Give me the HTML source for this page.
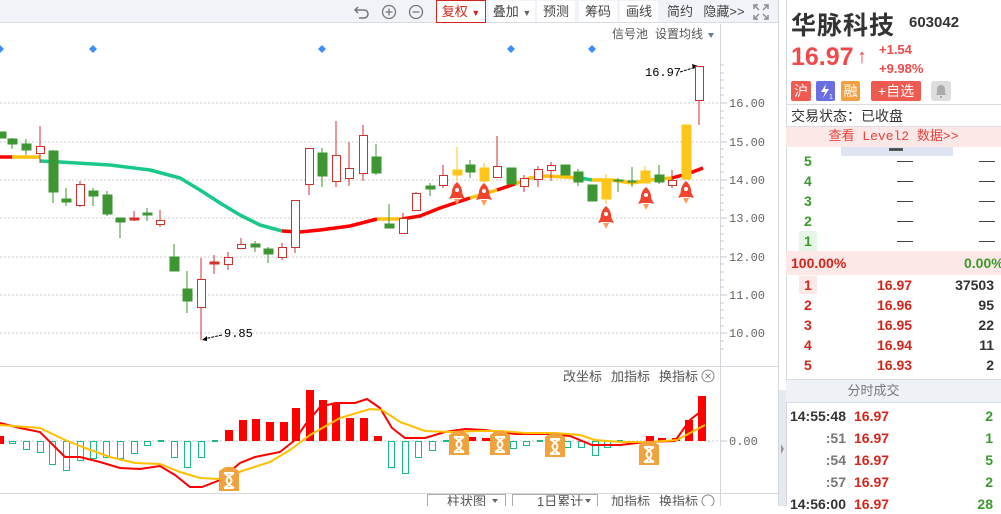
<!DOCTYPE html>
<html><head><meta charset="utf-8"><style>
*{margin:0;padding:0;box-sizing:border-box}
body{width:1001px;height:506px;overflow:hidden;background:#fff;font-family:"Liberation Sans","Noto Sans CJK SC",sans-serif;position:relative}
.a{position:absolute;white-space:nowrap}
.tb{position:absolute;left:0;top:0;width:778px;height:23px;background:#f0f3f8;border-bottom:1px solid #d8dce3}
.bt{position:absolute;top:1px;height:21px;background:#fff;font-size:13px;color:#444;line-height:21px;text-align:center}
.r{color:#d4251c}.g{color:#3a9a2c}
.rw{position:absolute;font-size:14px;font-weight:bold;height:20px;line-height:20px}
</style></head><body>
<div class="tb"></div>
<svg class="a" style="left:350px;top:2px" width="80" height="20">
<path d="M8 5 L5 8 L8 11 M5 8 H14 a4 4 0 0 1 0 8 H9" fill="none" stroke="#777" stroke-width="1.5"/>
<circle cx="39" cy="10" r="6.5" fill="none" stroke="#777" stroke-width="1.3"/><path d="M35.5 10h7M39 6.5v7" stroke="#777" stroke-width="1.3"/>
<circle cx="66" cy="10" r="6.5" fill="none" stroke="#777" stroke-width="1.3"/><path d="M62.5 10h7" stroke="#777" stroke-width="1.3"/>
</svg>
<div class="bt" style="left:436px;width:50px;border:1px solid #d4251c;top:0;height:23px;color:#d4251c">复权 <span style="font-size:9px">▼</span></div>
<div class="bt" style="left:489px;width:46px">叠加 <span style="font-size:9px;color:#666">▼</span></div>
<div class="bt" style="left:537px;width:38px">预测</div>
<div class="bt" style="left:579px;width:38px">筹码</div>
<div class="bt" style="left:620px;width:38px">画线</div>
<div class="bt" style="left:661px;width:38px;background:none">简约</div>
<div class="bt" style="left:702px;width:44px;background:none">隐藏&gt;&gt;</div>
<svg class="a" style="left:753px;top:4px" width="16" height="16"><path d="M1 5V1H5M11 1H15V5M15 11V15H11M5 15H1V11M2 2L6 6M14 2L10 6M14 14L10 10M2 14L6 10" fill="none" stroke="#888" stroke-width="1.4"/></svg>

<svg class="a" style="left:0;top:0" width="786" height="506">
<g stroke="#c8ccd2" stroke-dasharray="2,2" stroke-width="1">
<line x1="0" y1="103" x2="720" y2="103"/><line x1="0" y1="142" x2="720" y2="142"/><line x1="0" y1="180" x2="720" y2="180"/><line x1="0" y1="218" x2="720" y2="218"/><line x1="0" y1="257" x2="720" y2="257"/><line x1="0" y1="295" x2="720" y2="295"/><line x1="0" y1="333" x2="720" y2="333"/><line x1="0" y1="441" x2="720" y2="441"/>
</g>
<line x1="720.5" y1="24" x2="720.5" y2="506" stroke="#d4d8de"/>
<line x1="778.5" y1="0" x2="778.5" y2="506" stroke="#d4d8de"/>
<rect x="779" y="390" width="7" height="116" fill="#e6e9ef"/>
<path d="M781 444 L784 449 L781 454Z" fill="#999"/>
<line x1="0" y1="366.5" x2="778" y2="366.5" stroke="#d4d8de"/>
<line x1="0" y1="493.5" x2="778" y2="493.5" stroke="#d4d8de"/>
<g stroke="#c4c8ce">
<path d="M720 65h4M720 73h4M720 80h4M720 88h4M720 95h4M720 103h7M720 111h4M720 118h4M720 126h4M720 134h4M720 142h7M720 149h4M720 157h4M720 164h4M720 172h4M720 180h7M720 188h4M720 195h4M720 203h4M720 210h4M720 218h7M720 226h4M720 234h4M720 241h4M720 249h4M720 257h7M720 264h4M720 272h4M720 280h4M720 287h4M720 295h7M720 303h4M720 310h4M720 318h4M720 326h4M720 333h7M720 341h4M720 349h4M720 441h7"/>
</g>
<g font-family="Liberation Mono,monospace" font-size="12" fill="#666">
<text x="729" y="107">16.00</text><text x="729" y="146">15.00</text><text x="729" y="184">14.00</text><text x="729" y="222">13.00</text><text x="729" y="261">12.00</text><text x="729" y="299">11.00</text><text x="729" y="337">10.00</text><text x="729" y="445">0.00</text>
<text x="645" y="76" fill="#000">16.97</text><text x="224" y="337" fill="#000">9.85</text>
</g>
<path d="M680 72 L696 67 M222 335 L204 339" stroke="#000" stroke-dasharray="3,1"/>
<path d="M698 66 L692 64 L693 69Z M202 340 L207 336 L207 341Z" fill="#000"/>
<g fill="#3d8eff"><path d="M0 45l4 4-4 4-4-4z"/><path d="M93 45l4 4-4 4-4-4z"/><path d="M322 45l4 4-4 4-4-4z"/><path d="M511 45l4 4-4 4-4-4z"/><path d="M592 45l4 4-4 4-4-4z"/></g>

<g fill="none" stroke-width="3.5" stroke-linejoin="round">
<path d="M0 157 L12 157" stroke="#f00"/>
<path d="M12 157 L40 157" stroke="#ffc20e"/>
<path d="M40 161 L60 162 L110 165 L150 170 L180 178 L200 190 L220 203 L240 215 L260 225 L282 231" stroke="#1ac98a"/>
<path d="M282 231 L300 232 L320 230 L350 226 L377 219" stroke="#f00"/>
<path d="M377 219 L402 219" stroke="#ffc20e"/>
<path d="M402 219 L420 216 L440 208 L470 198" stroke="#f00"/>
<path d="M470 198 L497 190" stroke="#ffc20e"/>
<path d="M497 190 L515 184" stroke="#f00"/>
<path d="M515 184 L530 178 L546 176 L565 177 L580 178" stroke="#ffc20e"/>
<path d="M580 178 L592 180" stroke="#1ac98a"/>
<path d="M592 180 L612 180 L632 183 L650 180 L672 178" stroke="#ffc20e"/>
<path d="M672 178 L690 173 L703 168" stroke="#f00"/>
</g>

<g stroke-width="1">
<g fill="#3d9632" stroke="#3d9632">
<rect x="-2" y="132" width="8" height="6"/>
<line x1="12" y1="138" x2="12" y2="149"/><rect x="8" y="139" width="9" height="5"/>
<line x1="26" y1="139" x2="26" y2="155"/><rect x="22" y="144" width="9" height="6"/>
<line x1="53" y1="150" x2="53" y2="203"/><rect x="49" y="151" width="9" height="41"/>
<line x1="66" y1="188" x2="66" y2="206"/><rect x="62" y="199" width="9" height="3"/>
<line x1="93" y1="188" x2="93" y2="206"/><rect x="89" y="191" width="9" height="5"/>
<line x1="107" y1="191" x2="107" y2="216"/><rect x="103" y="195" width="9" height="19"/>
<line x1="120" y1="218" x2="120" y2="238"/><rect x="116" y="218" width="9" height="4"/>
<line x1="147" y1="208" x2="147" y2="221"/><rect x="143" y="213" width="9" height="2"/>
<line x1="174" y1="244" x2="174" y2="271"/><rect x="170" y="257" width="9" height="14"/>
<line x1="187" y1="271" x2="187" y2="313"/><rect x="183" y="289" width="9" height="12"/>
<line x1="255" y1="241" x2="255" y2="252"/><rect x="251" y="244" width="9" height="3"/>
<line x1="268" y1="247" x2="268" y2="263"/><rect x="264" y="249" width="9" height="5"/>
<line x1="322" y1="148" x2="322" y2="187"/><rect x="318" y="153" width="9" height="23"/>
<line x1="376" y1="144" x2="376" y2="175"/><rect x="372" y="157" width="9" height="16"/>
<line x1="389" y1="204" x2="389" y2="228"/><rect x="385" y="224" width="9" height="4"/>
<line x1="430" y1="183" x2="430" y2="196"/><rect x="426" y="186" width="9" height="3"/>
<line x1="470" y1="160" x2="470" y2="178"/><rect x="466" y="165" width="9" height="7"/>
<rect x="507" y="168" width="9" height="16"/>
<rect x="561" y="165" width="9" height="10"/>
<line x1="578" y1="169" x2="578" y2="186"/><rect x="574" y="172" width="9" height="10"/>
<rect x="588" y="185" width="9" height="16"/>
<line x1="618" y1="178" x2="618" y2="192"/><rect x="614" y="180" width="9" height="1"/>
<line x1="632" y1="167" x2="632" y2="187"/><rect x="628" y="181" width="8" height="1"/>
<line x1="659" y1="165" x2="659" y2="184"/><rect x="655" y="175" width="9" height="7"/>
</g>
<g fill="#fff" stroke="#d0312d">
<line x1="40" y1="126" x2="40" y2="163"/><rect x="36.5" y="146.5" width="8" height="7"/>
<line x1="80" y1="181" x2="80" y2="207"/><rect x="76.5" y="184.5" width="8" height="21"/>
<line x1="134" y1="211" x2="134" y2="221"/><rect x="130" y="218" width="9" height="2" fill="#d0312d"/>
<line x1="160" y1="210" x2="160" y2="227"/><rect x="156.5" y="220.5" width="8" height="4"/>
<line x1="201" y1="258" x2="201" y2="340"/><rect x="197.5" y="279.5" width="8" height="28"/>
<line x1="214" y1="255" x2="214" y2="274"/><rect x="210" y="262" width="9" height="2" fill="#d0312d"/>
<line x1="228" y1="252" x2="228" y2="270"/><rect x="224.5" y="257.5" width="8" height="7"/>
<line x1="241" y1="238" x2="241" y2="248"/><rect x="237.5" y="244.5" width="8" height="4"/>
<line x1="282" y1="243" x2="282" y2="260"/><rect x="278.5" y="247.5" width="8" height="10"/>
<line x1="295" y1="200" x2="295" y2="253"/><rect x="291.5" y="200.5" width="8" height="47"/>
<line x1="309" y1="148" x2="309" y2="195"/><rect x="305.5" y="148.5" width="8" height="36"/>
<line x1="336" y1="121" x2="336" y2="187"/><rect x="332.5" y="155.5" width="8" height="26"/>
<line x1="349" y1="142" x2="349" y2="186"/><rect x="345.5" y="168.5" width="8" height="10"/>
<line x1="363" y1="125" x2="363" y2="181"/><rect x="359.5" y="135.5" width="8" height="38"/>
<line x1="403" y1="213" x2="403" y2="233"/><rect x="399.5" y="218.5" width="8" height="15"/>
<line x1="416" y1="192" x2="416" y2="210"/><rect x="412.5" y="193.5" width="8" height="17"/>
<line x1="443" y1="165" x2="443" y2="188"/><rect x="439.5" y="175.5" width="8" height="10"/>
<line x1="497" y1="136" x2="497" y2="178"/><rect x="493.5" y="166.5" width="8" height="11"/>
<line x1="524" y1="175" x2="524" y2="192"/><rect x="520.5" y="178.5" width="8" height="8"/>
<line x1="538" y1="166" x2="538" y2="187"/><rect x="534.5" y="169.5" width="8" height="10"/>
<line x1="551" y1="162" x2="551" y2="181"/><rect x="547.5" y="165.5" width="8" height="5"/>
<line x1="672" y1="170" x2="672" y2="188"/><rect x="668.5" y="180.5" width="8" height="5"/>
<line x1="699" y1="100" x2="699" y2="125"/><rect x="695.5" y="66.5" width="8" height="34"/>
</g>
<g fill="#ffc61a" stroke="#ffc61a">
<line x1="457" y1="147" x2="457" y2="181"/><rect x="453" y="170" width="9" height="5"/>
<line x1="484" y1="163" x2="484" y2="182"/><rect x="480" y="168" width="9" height="13"/>
<line x1="606" y1="174" x2="606" y2="204"/><rect x="602" y="179" width="9" height="20"/>
<line x1="645" y1="166" x2="645" y2="183"/><rect x="641" y="171" width="9" height="12"/>
<rect x="682" y="125" width="9" height="54"/>
</g>
</g>

<defs><g id="rk">
<path d="M0 -11 C5 -7 6 -1 5 5 L-5 5 C-6 -1 -5 -7 0 -11Z" fill="#f2452f"/>
<path d="M-5 0 L-8 6 L-4 5Z M5 0 L8 6 L4 5Z" fill="#f2452f"/>
<path d="M-3 6 L0 12 L3 6Z" fill="#ff9a5a"/>
<circle cx="0" cy="-3" r="2" fill="#fff"/>
</g></defs>
<use href="#rk" x="457" y="193"/><use href="#rk" x="484" y="194"/><use href="#rk" x="606" y="217"/><use href="#rk" x="646" y="198"/><use href="#rk" x="686" y="192"/>

<g fill="#fff" stroke="#1ab98a">
<rect x="9.5" y="441.5" width="6" height="2"/><rect x="23.5" y="441.5" width="6" height="8"/><rect x="37.5" y="441.5" width="6" height="11"/><rect x="49.5" y="441.5" width="6" height="23"/><rect x="63.5" y="441.5" width="6" height="29"/><rect x="77.5" y="441.5" width="6" height="19"/><rect x="90.5" y="441.5" width="6" height="17"/><rect x="103.5" y="441.5" width="6" height="16"/><rect x="117.5" y="441.5" width="6" height="17"/><rect x="131.5" y="441.5" width="6" height="12"/><rect x="144.5" y="441.5" width="6" height="4"/><rect x="171.5" y="441.5" width="6" height="16"/><rect x="184.5" y="441.5" width="6" height="26"/><rect x="198.5" y="441.5" width="6" height="16"/>
<rect x="388.5" y="441.5" width="6" height="26"/><rect x="402.5" y="441.5" width="6" height="32"/><rect x="415.5" y="441.5" width="6" height="16"/><rect x="429.5" y="441.5" width="6" height="9"/>
<rect x="510.5" y="441.5" width="6" height="7"/><rect x="523.5" y="441.5" width="6" height="4"/><rect x="564.5" y="441.5" width="6" height="6"/><rect x="578.5" y="441.5" width="6" height="6"/><rect x="592.5" y="441.5" width="6" height="14"/><rect x="604.5" y="441.5" width="6" height="6"/>
</g>
<g fill="#1ab98a"><rect x="158" y="440" width="6" height="2"/><rect x="212" y="440" width="6" height="2"/><rect x="443" y="440" width="6" height="2"/><rect x="537" y="440" width="6" height="2"/><rect x="617" y="440" width="6" height="2"/></g>
<g fill="#f00">
<rect x="-3" y="436" width="7" height="8"/>
<rect x="225" y="430" width="8" height="11"/><rect x="239" y="420" width="8" height="21"/><rect x="252" y="419" width="8" height="22"/><rect x="266" y="422" width="8" height="19"/><rect x="280" y="422" width="8" height="19"/><rect x="292" y="408" width="8" height="33"/><rect x="306" y="390" width="8" height="51"/><rect x="319" y="400" width="8" height="41"/><rect x="332" y="403" width="8" height="38"/><rect x="346" y="418" width="8" height="23"/><rect x="360" y="418" width="8" height="23"/><rect x="374" y="436" width="8" height="5"/>
<rect x="454" y="436" width="8" height="7"/><rect x="468" y="437" width="8" height="4"/><rect x="482" y="438" width="8" height="3"/><rect x="646" y="436" width="8" height="5"/><rect x="658" y="438" width="8" height="3"/><rect x="672" y="438" width="8" height="3"/><rect x="685" y="420" width="8" height="21"/><rect x="698" y="396" width="8" height="45"/>
</g>
<path d="M0 423 L20 428 L40 432 L65 457 L80 457 L100 462 L120 468 L140 469 L160 466 L175 475 L190 487 L202 487 L220 480 L240 463 L255 457 L280 452 L295 440 L305 425 L320 407 L335 403 L355 403 L367 399 L380 408 L392 428 L405 438 L425 438 L445 432 L465 429 L485 430 L515 434 L550 434 L570 436 L592 445 L620 445 L645 442 L675 441 L690 420 L700 412" fill="none" stroke="#f00" stroke-width="2"/>
<path d="M0 425 L40 428 L65 440 L85 448 L110 457 L135 463 L160 464 L180 472 L200 478 L220 479 L245 470 L270 462 L290 450 L310 435 L340 418 L370 409 L382 410 L400 422 L425 431 L450 432 L480 431 L500 431 L525 433 L555 433 L580 435 L595 440 L620 442 L650 442 L677 440 L690 433 L705 425" fill="none" stroke="#ffbf00" stroke-width="2"/>
<defs><g id="bx"><path d="M-10 -8 L-4 -12 L4 -12 L10 -8 L10 12 L-10 12Z" fill="#f0a23c"/><path d="M-5 -6 C5 0 5 3 -5 9 M5 -6 C-5 0 -5 3 5 9 M-5 -6h10 M-5 9h10" fill="none" stroke="#fff" stroke-width="2"/></g></defs>
<use href="#bx" x="229" y="479"/><use href="#bx" x="459" y="443"/><use href="#bx" x="500" y="443"/><use href="#bx" x="555" y="445"/><use href="#bx" x="649" y="453"/>
<g font-size="13" fill="#555" font-family="Liberation Sans,Noto Sans CJK SC,sans-serif">
<text x="612" y="38" font-size="12">信号池</text><text x="655" y="38" font-size="12">设置均线</text>
<text x="563" y="381">改坐标</text><text x="611" y="381">加指标</text><text x="659" y="381">换指标</text>
<text x="611" y="506">加指标</text><text x="659" y="506">换指标</text>
<text x="447" y="506">柱状图</text><text x="537" y="506">1日累计</text>
</g>
<path d="M708 33 L714 33 L711 38Z" fill="#6a7a9a"/>
<circle cx="708" cy="376" r="6" fill="none" stroke="#888"/><path d="M705.5 373.5l5 5M710.5 373.5l-5 5" stroke="#888"/>
<circle cx="708" cy="501" r="6" fill="none" stroke="#888"/>
<rect x="427.5" y="494.5" width="78" height="14" fill="none" stroke="#aaa"/><rect x="512.5" y="494.5" width="85" height="14" fill="none" stroke="#aaa"/>
<path d="M492 499h6l-3 4z M585 499h6l-3 4z" fill="#666"/>
</svg>

<div class="a" style="left:786px;top:0;width:215px;height:506px;border-left:1px solid #d4d8de"></div>
<div class="a" style="left:791px;top:6px;font-size:25px;font-weight:bold;color:#333;letter-spacing:1px">华脉科技</div>
<div class="a" style="left:909px;top:14px;font-size:15px;font-weight:bold;color:#333">603042</div>
<div class="a" style="left:791px;top:43px;font-size:25px;font-weight:bold;color:#f0494a">16.97</div>
<div class="a" style="left:857px;top:46px;font-size:20px;font-weight:bold;color:#f0494a">↑</div>
<div class="a" style="left:879px;top:42px;font-size:13px;font-weight:bold;color:#f0494a">+1.54</div>
<div class="a" style="left:879px;top:61px;font-size:13px;font-weight:bold;color:#f0494a">+9.98%</div>
<div class="a" style="left:791px;top:81px;width:20px;height:20px;background:#f05a50;color:#fff;font-size:14px;text-align:center;line-height:20px;border-radius:2px">沪</div>
<div class="a" style="left:816px;top:81px;width:19px;height:20px;background:#6a6ee0;border-radius:2px"><svg width="19" height="20"><path d="M10 3 L5 11 L9 11 L7 17 L13 8 L9 8Z" fill="#fff"/><text x="13" y="18" font-size="7" fill="#fff">1</text></svg></div>
<div class="a" style="left:841px;top:81px;width:19px;height:20px;background:#f5a040;color:#fff;font-size:14px;text-align:center;line-height:20px;border-radius:2px">融</div>
<div class="a" style="left:871px;top:81px;width:50px;height:20px;background:#f05a50;color:#fff;font-size:14px;text-align:center;line-height:20px;border-radius:2px">+自选</div>
<div class="a" style="left:931px;top:81px;width:20px;height:20px;background:#ddd;border-radius:3px"><svg width="20" height="20"><path d="M5 14 L6 12 L6 8 A4 4 0 0 1 14 8 L14 12 L15 14Z M9 15 h2 v2 h-2z" fill="#aaa"/></svg></div>
<div class="a" style="left:786px;top:104px;width:215px;border-top:1px solid #d8dce3"></div>
<div class="a" style="left:791px;top:106px;font-size:14px;color:#333">交易状态：已收盘</div>
<div class="a" style="left:786px;top:126px;width:215px;height:21px;background:#fde8e8;border-top:1px solid #d8dce3;font-family:'Liberation Mono','Noto Sans CJK SC',monospace;font-size:13px;color:#e8413a;text-align:center;line-height:20px">查看 Level2 数据&gt;&gt;</div>
<div class="a" style="left:841px;top:147px;width:112px;height:9px;background:#dfe4f2"></div>
<div class="a" style="left:889px;top:148px;width:14px;height:3px;background:#555"></div>
<div class="a" style="left:799px;top:231px;width:18px;height:20px;background:#e6f6e6"></div>
<div class="rw g" style="left:804px;top:151px">5</div><div class="rw g" style="left:804px;top:171px">4</div><div class="rw g" style="left:804px;top:191px">3</div><div class="rw g" style="left:804px;top:211px">2</div><div class="rw g" style="left:804px;top:231px">1</div>
<div class="a" style="left:897px;top:161px;width:16px;height:100px;background:repeating-linear-gradient(#fff 0 0px,#444 0 1px,#fff 1px 20px)"></div>
<div class="a" style="left:979px;top:161px;width:16px;height:100px;background:repeating-linear-gradient(#fff 0 0px,#444 0 1px,#fff 1px 20px)"></div>
<div class="a" style="left:786px;top:251px;width:215px;height:24px;background:#fde8e8"></div>
<div class="rw r" style="left:791px;top:253px">100.00%</div>
<div class="rw g" style="left:964px;top:253px">0.00%</div>
<div class="a" style="left:799px;top:276px;width:18px;height:18px;background:#fde8e8"></div>
<div class="rw r" style="left:804px;top:275px">1</div><div class="rw r" style="left:804px;top:295px">2</div><div class="rw r" style="left:804px;top:315px">3</div><div class="rw r" style="left:804px;top:335px">4</div><div class="rw r" style="left:804px;top:355px">5</div>
<div class="rw r" style="left:877px;top:275px">16.97</div><div class="rw r" style="left:877px;top:295px">16.96</div><div class="rw r" style="left:877px;top:315px">16.95</div><div class="rw r" style="left:877px;top:335px">16.94</div><div class="rw r" style="left:877px;top:355px">16.93</div>
<div class="rw" style="right:7px;top:275px;color:#333">37503</div><div class="rw" style="right:7px;top:295px;color:#333">95</div><div class="rw" style="right:7px;top:315px;color:#333">22</div><div class="rw" style="right:7px;top:335px;color:#333">11</div><div class="rw" style="right:7px;top:355px;color:#333">2</div>
<div class="a" style="left:786px;top:379px;width:215px;height:24px;background:#eef1f6;border-top:1px solid #d8dce3;border-bottom:1px solid #d8dce3;font-size:13px;color:#777;text-align:center;line-height:22px;padding-right:40px">分时成交</div>
<div class="rw" style="right:155px;top:406px;color:#333">14:55:48</div>
<div class="rw" style="right:155px;top:428px;color:#777">:51</div>
<div class="rw" style="right:155px;top:450px;color:#777">:54</div>
<div class="rw" style="right:155px;top:472px;color:#777">:57</div>
<div class="rw" style="right:155px;top:494px;color:#333">14:56:00</div>
<div class="rw r" style="left:854px;top:406px">16.97</div><div class="rw r" style="left:854px;top:428px">16.97</div><div class="rw r" style="left:854px;top:450px">16.97</div><div class="rw r" style="left:854px;top:472px">16.97</div><div class="rw r" style="left:854px;top:494px">16.97</div>
<div class="rw g" style="right:8px;top:406px">2</div><div class="rw g" style="right:8px;top:428px">1</div><div class="rw g" style="right:8px;top:450px">5</div><div class="rw g" style="right:8px;top:472px">2</div><div class="rw g" style="right:8px;top:494px">28</div>
</body></html>
